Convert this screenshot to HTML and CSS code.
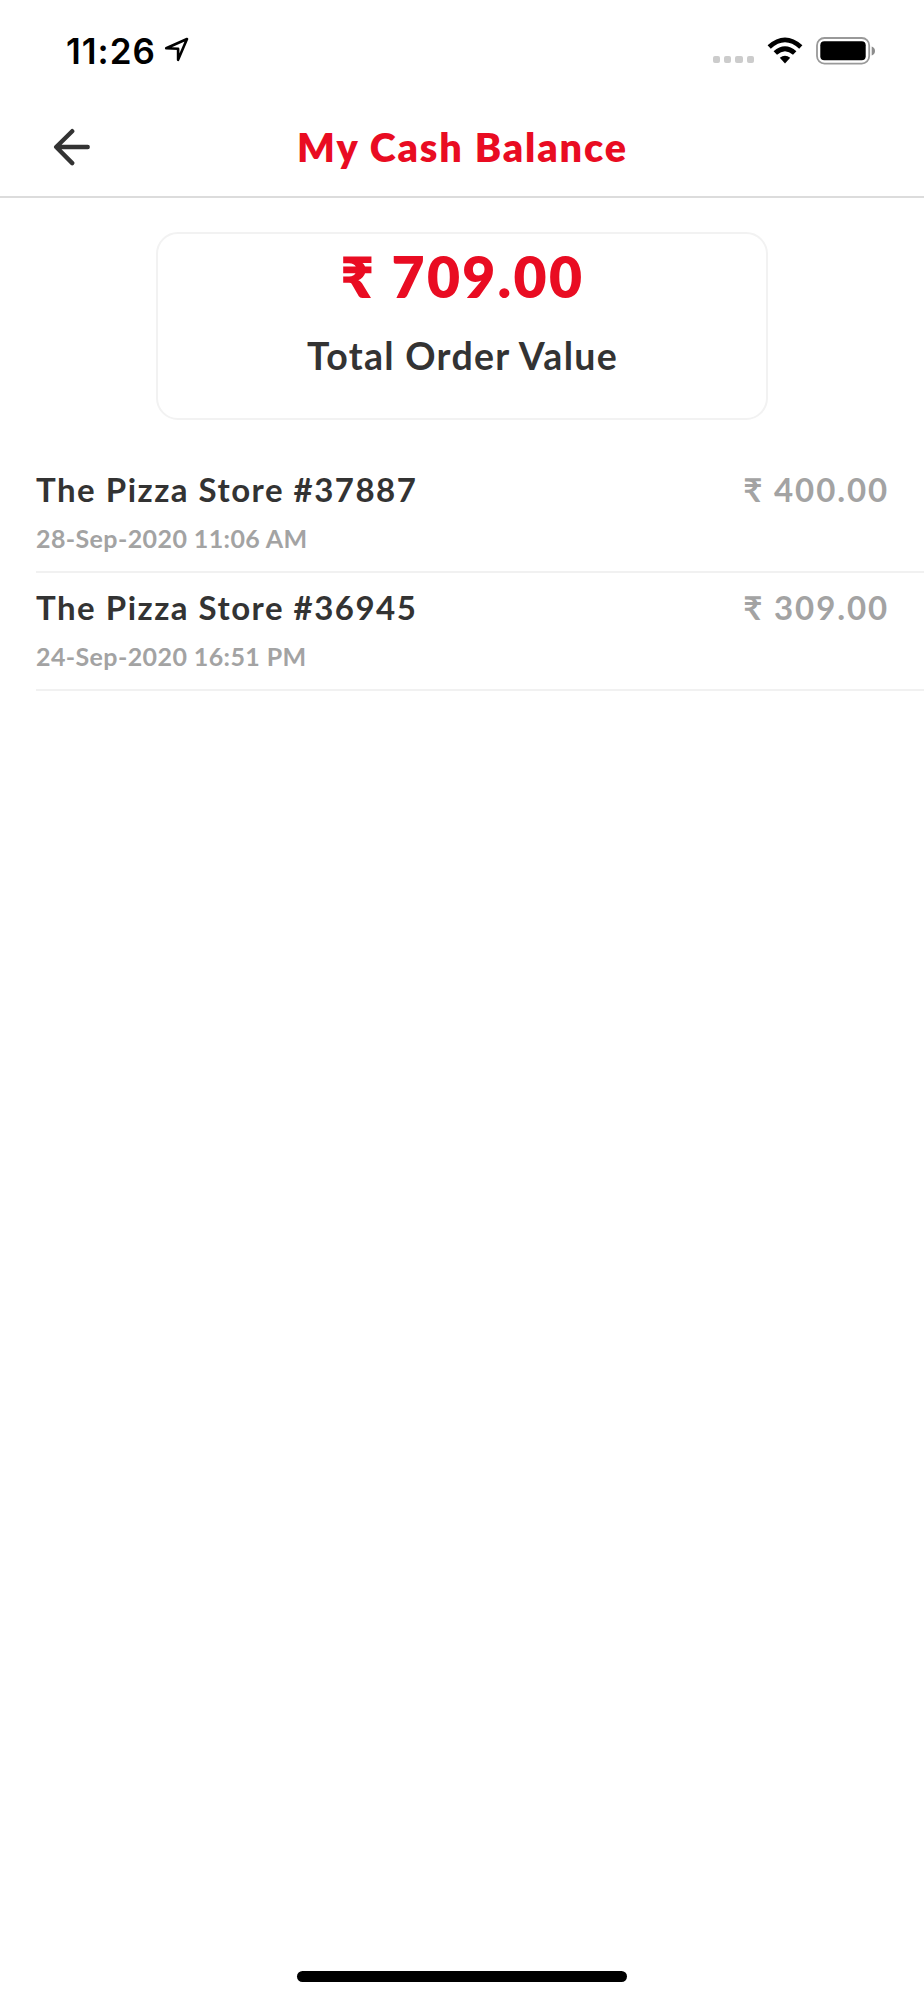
FILE: index.html
```html
<!DOCTYPE html>
<html lang="en">
<head>
<meta charset="utf-8">
<title>My Cash Balance</title>
<link rel="stylesheet" href="styles.css">
</head>
<body>
<div class="screen">
  <div class="status">
    <span class="time">11:26</span>
    <svg class="location" width="26" height="26" viewBox="0 0 26 26"><path d="M2.2 11.2 23 2 14.1 22.8V11.7Z" fill="none" stroke="#000" stroke-width="2.6" stroke-linejoin="round"/></svg>
    <div class="signal"><i></i><i></i><i></i><i></i></div>
    <svg class="wifi" width="36" height="28" viewBox="0 0 36 28">
      <path d="M.6 8.3Q18-7.2 35.4 8.3L32.2 11.7Q18-1.2 3.8 11.7Z"/>
      <path d="M6.6 14.3Q18 4.2 29.4 14.3L26 17.7Q18 10.6 10 17.7Z"/>
      <path d="M12.8 20.7Q18 17 23.2 20.7L18 26.4Z"/>
    </svg>
    <svg class="battery" width="60" height="28" viewBox="0 0 60 28">
      <rect x="1" y="1" width="52.2" height="25.6" rx="7.5" fill="none" stroke="#999" stroke-width="1.8"/>
      <rect x="4.3" y="4.3" width="45.4" height="19" rx="4"/>
      <path d="M55.7 9.5Q59 10.8 59 14T55.7 18.6Z" fill="#8c8c8c"/>
    </svg>
  </div>
  <header class="header">
    <svg class="back" width="38" height="38" viewBox="0 0 38 38"><path d="M34.7 19H3.4M19.2 3.2 3.2 19 19.2 35.1" fill="none" stroke="#333" stroke-width="4.4" stroke-linecap="round" stroke-linejoin="round"/></svg>
    <h1 class="title">My Cash Balance</h1>
  </header>
  <main class="main">
    <section class="card">
      <div class="total">₹ 709.00</div>
      <div class="label">Total Order Value</div>
    </section>
    <ul class="orders">
      <li class="order">
        <div class="line"><span class="store">The Pizza Store #37887</span><span class="amount">₹ 400.00</span></div>
        <div class="date">28-Sep-2020 11:06 AM</div>
      </li>
      <li class="order">
        <div class="line"><span class="store">The Pizza Store #36945</span><span class="amount">₹ 309.00</span></div>
        <div class="date">24-Sep-2020 16:51 PM</div>
      </li>
    </ul>
  </main>
  <div class="home"></div>
</div>
</body>
</html>
```
FILE: styles.css
```css
* { box-sizing: border-box; }
body { margin: 0; background: #fff; color: #333; font-family: Lato, "Open Sans", sans-serif; }
.screen { width: 924px; height: 2000px; display: flex; flex-direction: column; overflow: hidden; }
.status { height: 100px; padding: 36px 48px 0 66px; display: flex; align-items: flex-start; }
.time { width: 90px; font: 600 35px/30px Inter, sans-serif; letter-spacing: 1px; color: #000; white-space: nowrap; }
.location { margin: 1px auto 0 8px; }
.signal { display: flex; gap: 4px; margin: 20px 13px 0 0; }
.signal i { width: 7.3px; height: 7.3px; border-radius: 2px; background: #ccc; }
.wifi { margin: 1px 13px 0 0; }
.battery { margin: .5px 0 0; }
.header { height: 98px; border-bottom: 2px solid #dcdcdc; display: flex; align-items: center; padding: 0 53px; }
.back { margin-top: -3px; flex: none; }
.title { flex: 1; margin: -2px 37px 0 0; text-align: center; font-size: 39.5px; line-height: 48px; font-weight: 800; letter-spacing: 1.9px; color: #e90c22; white-space: nowrap; }
.main { flex: 1; padding-top: 34px; }
.card { width: 612px; height: 188px; margin: 0 auto; border: 2px solid #f2f2f2; border-radius: 22px; text-align: center; }
.total { margin-top: 7px; padding-left: 1px; font-size: 57px; line-height: 70px; font-weight: 800; letter-spacing: 2.3px; color: #e90c22; }
.label { margin-top: 20px; padding-left: 1px; font-size: 37.5px; line-height: 50px; font-weight: 700; letter-spacing: 1.3px; }
.orders { list-style: none; margin: 34px 0 0 36px; padding: 0; }
.order { height: 118px; border-bottom: 2px solid #f1f1f1; padding-top: 12px; }
.order:first-child { height: 119px; padding-top: 13px; }
.line { display: flex; justify-content: space-between; padding-right: 35px; font-size: 33px; line-height: 44px; font-weight: 700; }
.store { letter-spacing: 1.5px; }
.amount { letter-spacing: 1.9px; color: #a3a3a3; }
.date { margin-top: 11px; font-size: 25px; line-height: 32px; font-weight: 700; letter-spacing: .4px; color: #a3a3a3; }
.home { width: 330px; height: 11px; margin: 0 auto 18px; border-radius: 6px; background: #000; }
```
